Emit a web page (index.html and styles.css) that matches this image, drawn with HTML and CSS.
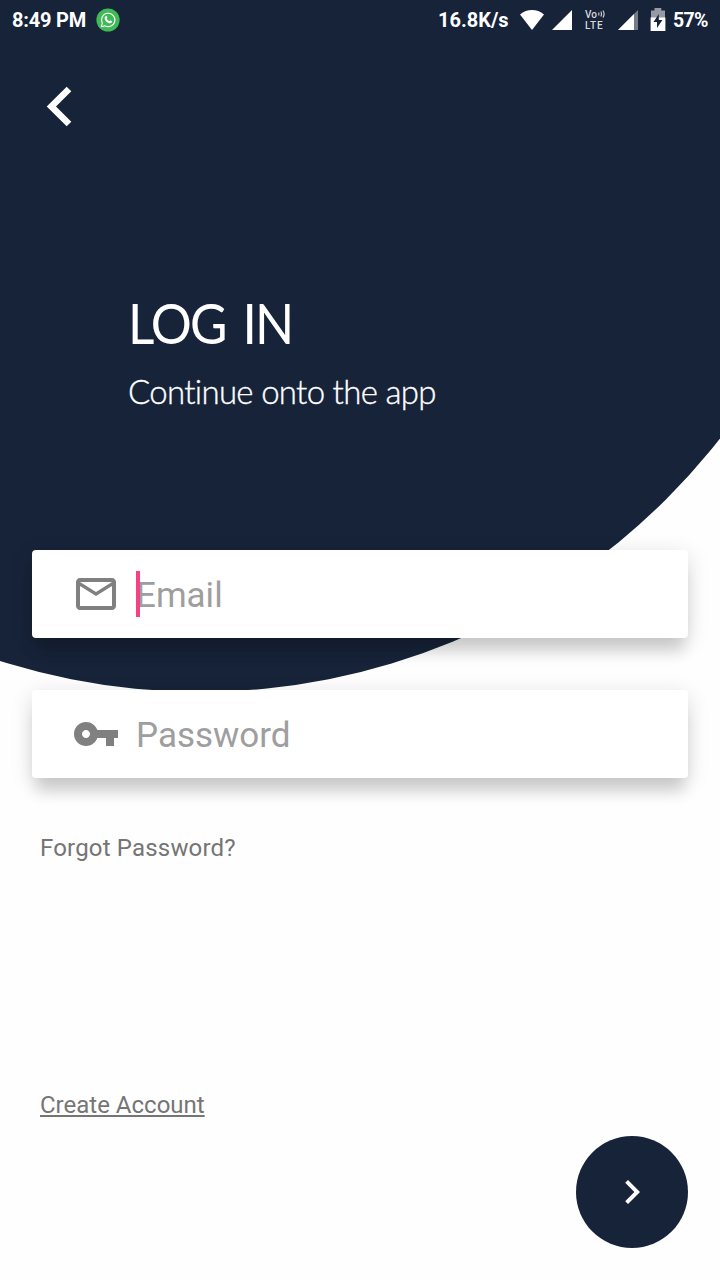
FILE: index.html
```html
<!DOCTYPE html>
<html lang="en">
<head>
<meta charset="utf-8">
<title>Log in</title>
<link rel="stylesheet" href="styles.css">
</head>
<body>
<main class="screen">
  <div class="backdrop"></div>
  <header class="status">
    <span class="clock">8:49 PM</span>
    <svg class="whatsapp" width="24" height="24" viewBox="0 0 24 24">
      <circle cx="12" cy="12" r="11.6" fill="#40b957"/>
      <path d="M5.3 18.8l1-3.7a6.7 6.7 0 1 1 2.5 2.6z" fill="none" stroke="#fff" stroke-width="1.1" stroke-linejoin="round"/>
      <path d="M9.6 8.2c.5-.4 1-.3 1.2.2l.5 1.2c.1.4-.6.8-.5 1.2.5 1.1 1.3 1.8 2.4 2.3.5.1.8-.8 1.2-.7l1.3.7c.5.3.3 1.1-.1 1.5-.9.9-2.2.8-3.5.1-1.5-.8-2.6-1.9-3.2-3.3-.5-1.2-.3-2.4.7-3.2z" fill="#fff"/>
    </svg>
    <span class="speed">16.8K/s</span>
    <svg class="wifi" width="24" height="20" viewBox="0 0 24 20"><path d="M0 4.4C7-1.4 17-1.4 24 4.4L12 20z" fill="#fff"/></svg>
    <svg class="signal-one" width="20" height="20" viewBox="0 0 20 20"><path d="M20 0v20H0z" fill="#fff"/></svg>
    <span class="volte">
      <span class="vo">Vo<svg width="7" height="8" viewBox="0 0 7 8"><path d="M.8 2.5v3M2.8 1.5q1.4 2.5 0 5M5 .5q2.2 3.5 0 7" fill="none" stroke="#d5d8dd" stroke-width="1.1"/></svg></span>
      <span class="lte">LTE</span>
    </span>
    <svg class="signal-two" width="20" height="20" viewBox="0 0 20 20"><path d="M20 0v20H0z" fill="#757c89"/><path d="M16 4V20H0z" fill="#fff"/></svg>
    <svg class="battery" width="16" height="24" viewBox="0 0 16 24"><path d="M1 2.6h3.5V0h6.8v2.6H15V10H1z" fill="#959aa4"/><path d="M.6 9.5h14.8V23H.6z" fill="#fff"/><path d="M8.8 6v6h3.6L7 20v-6H3.5z" fill="#172339"/></svg>
    <span class="percent">57%</span>
  </header>
  <button class="back" aria-label="Back"><svg width="26" height="41" viewBox="0 0 26 41"><path d="M23 3L5.4 20.5 23 38" fill="none" stroke="#fff" stroke-width="6.6"/></svg></button>
  <section class="heading">
    <h1>LOG IN</h1>
    <p>Continue onto the app</p>
  </section>
  <form class="fields">
    <div class="field">
      <svg class="icon" width="48" height="48" viewBox="0 0 24 24"><path d="M22 6c0-1.1-.9-2-2-2H4c-1.1 0-2 .9-2 2v12c0 1.1.9 2 2 2h16c1.1 0 2-.9 2-2V6zm-2 0l-8 5-8-5h16zm0 12H4V8l8 5 8-5v10z" fill="#808080"/></svg>
      <span class="hint active">Email</span>
    </div>
    <div class="field">
      <svg class="icon" width="48" height="48" viewBox="0 0 24 24"><path d="M12.65 10C11.83 7.67 9.61 6 7 6c-3.31 0-6 2.69-6 6s2.69 6 6 6c2.61 0 4.83-1.67 5.65-4H17v4h4v-4h2v-4H12.65zM7 14c-1.1 0-2-.9-2-2s.9-2 2-2 2 .9 2 2-.9 2-2 2z" fill="#808080"/></svg>
      <span class="hint">Password</span>
    </div>
  </form>
  <a class="link forgot">Forgot Password?</a>
  <a class="link create">Create Account</a>
  <button class="next" aria-label="Next"><svg width="48" height="48" viewBox="0 0 24 24"><path d="M10 6L8.59 7.41 13.17 12l-4.58 4.59L10 18l6-6z" fill="#fff"/></svg></button>
</main>
</body>
</html>
```
FILE: styles.css
```css
* { box-sizing: border-box; }
body { margin: 0; background: #fefefe; font-family: Roboto, sans-serif; }
button { border: 0; padding: 0; background: none; }
svg { display: block; flex: none; }

.screen {
  position: relative;
  display: flex;
  flex-direction: column;
  width: 720px;
  height: 1280px;
  overflow: hidden;
}
.screen > * { flex: none; }
.backdrop {
  position: absolute;
  z-index: -1;
  left: -460px;
  top: -628px;
  width: 1320px;
  height: 1320px;
  border-radius: 50%;
  background: #172339;
}
.screen::before {
  content: "";
  position: absolute;
  z-index: -1;
  inset: 0 0 auto;
  height: 400px;
  background: #172339;
}

.status {
  display: flex;
  align-items: center;
  height: 40px;
  padding-left: 12px;
  color: #fff;
  font-size: 20px;
  font-weight: 700;
  line-height: 40px;
  white-space: nowrap;
}
.clock { width: 84px; letter-spacing: -0.2px; }
.speed { width: 82px; margin-left: 318px; }
.signal-one { margin-left: 8px; }
.volte {
  width: 22px;
  margin-left: 13px;
  color: #d5d8dd;
  font-size: 10px;
  font-weight: 500;
}
.vo { display: flex; align-items: center; gap: 1px; height: 9px; line-height: 9px; }
.lte { display: block; height: 10px; margin-top: 2px; line-height: 10px; letter-spacing: 0.8px; }
.signal-two { margin-left: 11px; }
.battery { margin-left: 12px; }
.percent { margin-left: 7px; padding-top: 1px; font-size: 19.5px; letter-spacing: -0.7px; }

.back { width: 26px; height: 41px; margin: 46px 0 0 46px; }

.heading {
  padding: 161px 0 0 128px;
  color: #fff;
  font-family: "Coming Soon", Lato, sans-serif;
  font-variant-ligatures: none;
}
.heading h1 {
  margin: 0;
  font-size: 57px;
  font-weight: 400;
  line-height: 68px;
  letter-spacing: -2px;
  word-spacing: 6px;
  transform: scaleX(0.9);
  transform-origin: left;
}
.heading p {
  margin: 14px 0 0;
  font-size: 33px;
  font-weight: 300;
  line-height: 42px;
  letter-spacing: -0.7px;
  -webkit-text-stroke: 0.35px #fff;
}

.fields {
  display: grid;
  gap: 52px;
  margin: 138px 32px 0;
}
.field {
  display: flex;
  align-items: center;
  gap: 16px;
  height: 88px;
  padding-left: 40px;
  border-radius: 4px;
  background: #fff;
  box-shadow: 0 18px 14px -4px rgba(0, 0, 0, 0.13), 0 5px 22px rgba(0, 0, 0, 0.14);
}
.hint {
  position: relative;
  padding-top: 4px;
  color: #9e9e9e;
  font-size: 35px;
  line-height: 44px;
}
.active::before {
  content: "";
  position: absolute;
  left: 0;
  top: 1px;
  width: 4px;
  height: 46px;
  background: #f64282;
}

.link {
  align-self: flex-start;
  margin-left: 40px;
  color: #757575;
  font-size: 24px;
  line-height: 30px;
}
.forgot { margin-top: 55px; letter-spacing: 0.18px; }
.create {
  margin-top: 227px;
  text-decoration: underline;
  text-decoration-thickness: 2px;
  text-underline-offset: 2px;
}
.next {
  display: flex;
  align-items: center;
  justify-content: center;
  width: 112px;
  height: 112px;
  margin: 16px 0 0 576px;
  border-radius: 50%;
  background: #172339;
}
```
